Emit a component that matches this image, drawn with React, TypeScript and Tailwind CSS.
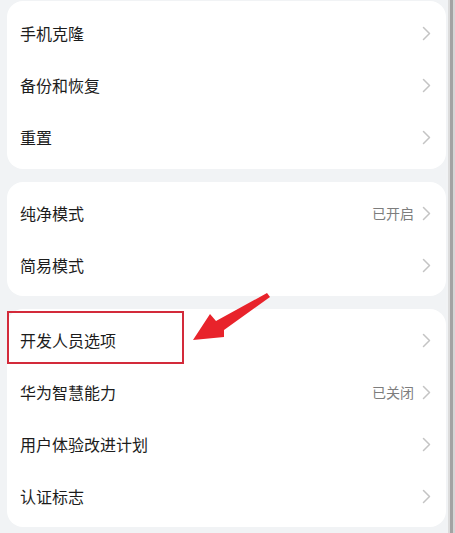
import React from 'react';

type Item = { label: string; value?: string };

const groups: { items: Item[]; className: string }[] = [
  {
    className: 'mt-[1px] py-[6px]',
    items: [{ label: '手机克隆' }, { label: '备份和恢复' }, { label: '重置' }],
  },
  {
    className: 'py-[5px]',
    items: [{ label: '纯净模式', value: '已开启' }, { label: '简易模式' }],
  },
  {
    className: 'py-[5px]',
    items: [
      { label: '开发人员选项' },
      { label: '华为智慧能力', value: '已关闭' },
      { label: '用户体验改进计划' },
      { label: '认证标志' },
    ],
  },
];

function Chevron() {
  return (
    <svg width="9" height="15" viewBox="0 0 9 15" fill="none" className="shrink-0">
      <path d="M1.5 1.5 L7.5 7.5 L1.5 13.5" stroke="#c4c4c4" strokeWidth="1.5" strokeLinecap="round" strokeLinejoin="round" />
    </svg>
  );
}

function Row({ item }: { item: Item }) {
  return (
    <div className="flex items-center h-[52px] pl-[13px] pr-[15px]">
      <span className="flex-1 text-[16px] text-[#1c1c1c] leading-none">{item.label}</span>
      {item.value && <span className="text-[14px] text-[#7d7d7d] mr-[8px] leading-none">{item.value}</span>}
      <Chevron />
    </div>
  );
}

export default function App() {
  return (
    <div
      className="relative w-[455px] h-[533px] overflow-hidden bg-[#f1f3f5] flex"
      style={{ fontFamily: '"Noto Sans CJK SC", "Noto Sans", sans-serif' }}
    >
      <div className="flex-1 pl-[7px] pr-[2px] flex flex-col gap-[13px]">
        {groups.map((g, i) => (
          <div key={i} className={`bg-white rounded-[16px] ${g.className}`}>
            {g.items.map(it => (
              <Row key={it.label} item={it} />
            ))}
          </div>
        ))}
      </div>
      {/* right edge strip */}
      <div className="w-[7px] flex">
        <div className="w-[2px] bg-[#dcdcdc]" />
        <div className="w-[3px] bg-[#a3a3a3]" />
        <div className="w-[2px] bg-[#d6d6d6]" />
      </div>

      {/* annotation box */}
      <div className="absolute left-[7px] top-[311px] w-[177px] h-[53px] border-2 border-[#d32a3a]" />

      {/* annotation arrow */}
      <svg className="absolute left-0 top-0" width="455" height="533" viewBox="0 0 455 533">
        <polygon
          points="193,340 210,314 216,321 267,293 270,297 224,330 224,337"
          fill="#e8232b"
        />
      </svg>
    </div>
  );
}
